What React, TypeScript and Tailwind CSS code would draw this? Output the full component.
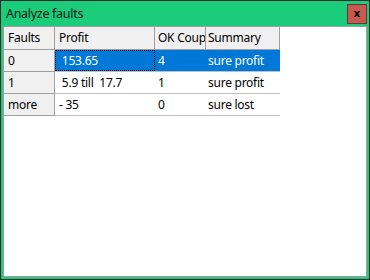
import React from 'react';

type Row = { faults: string; profit: string; ok: string; summary: string; selected?: boolean };

const rows: Row[] = [
    { faults: '0', profit: ' 153.65', ok: '4', summary: 'sure profit', selected: true },
    { faults: '1', profit: ' 5.9 till  17.7', ok: '1', summary: 'sure profit' },
    { faults: 'more', profit: '- 35', ok: '0', summary: 'sure lost' },
];

const App: React.FC = () => {
    return (
        <div
            className="w-[370px] h-[280px] border border-[#2b2b2b] bg-[#1bcc7b] flex flex-col overflow-hidden"
            style={{ fontFamily: '"Noto Sans", "Open Sans", sans-serif' }}
        >
            {/* Title bar */}
            <div className="h-[25px] shrink-0 flex items-center justify-between pl-[5px] pr-[2px]">
                <span className="text-[12.5px] tracking-[-0.3px] text-[#0a1a12] leading-none pt-[1px]">Analyze faults</span>
                <button className="w-[20px] h-[20px] border border-[#5c3a38] bg-[#c75a50] flex items-center justify-center text-[11px] font-bold text-black leading-none pb-[2px]">
                    x
                </button>
            </div>

            {/* Grid area */}
            <div className="flex-1 mx-[2px] mb-[2px] border border-[#a0a0a0] bg-white text-[12px] tracking-[-0.25px] text-black">
                {/* Header */}
                <div className="flex w-[276px] h-[23px] bg-[#f0f0f0] border-b border-[#a0a0a0]">
                    <div className="w-[51px] border-r border-[#a0a0a0] flex items-center pl-[4px]">Faults</div>
                    <div className="w-[100px] border-r border-[#a0a0a0] flex items-center pl-[4px]">Profit</div>
                    <div className="w-[51px] border-r border-[#a0a0a0] pl-[3px] overflow-hidden">
                        <span className="block leading-[22px] whitespace-nowrap">OK Coup</span>
                    </div>
                    <div className="w-[74px] border-r border-[#a0a0a0] flex items-center pl-[2px]">Summary</div>
                </div>

                {rows.map((r) => (
                    <div key={r.faults} className="flex w-[276px] h-[22px]">
                        <div className="w-[51px] bg-[#f0f0f0] border-r border-b border-[#a0a0a0] flex items-center pl-[4px]">
                            {r.faults}
                        </div>
                        <div
                            className={
                                r.selected
                                    ? 'flex w-[225px] h-[22px] bg-[#0078d7] text-white border-b border-[#c0c0c0]'
                                    : 'flex w-[225px] h-[22px] border-b border-[#c0c0c0]'
                            }
                        >
                            <div
                                className={
                                    r.selected
                                        ? 'w-[100px] border border-dotted border-black flex items-center pl-[3px] whitespace-pre'
                                        : 'w-[100px] flex items-center pl-[4px] whitespace-pre'
                                }
                            >
                                {r.profit}
                            </div>
                            <div className="w-[51px] flex items-center pl-[3px]">{r.ok}</div>
                            <div className="w-[74px] flex items-center pl-[2px]">{r.summary}</div>
                        </div>
                    </div>
                ))}
            </div>
        </div>
    );
};

export default App;
